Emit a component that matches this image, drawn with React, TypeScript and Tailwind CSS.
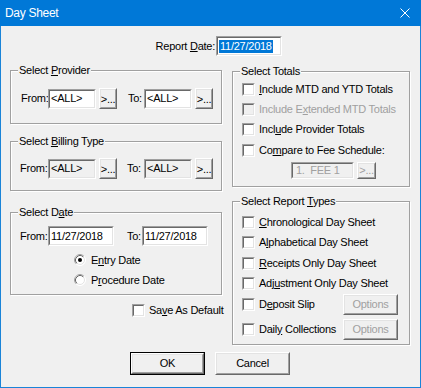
import React from 'react';

type Kids = { className?: string; children?: React.ReactNode };

const U = ({ children }: { children: React.ReactNode }) => <span className="underline underline-offset-[1px]">{children}</span>;

// classic 3D sunken edit box
const Sunken: React.FC<Kids & { inner?: string }> = ({ className = '', inner = 'bg-white', children }) => (
  <div className={`border border-t-[#a0a0a0] border-l-[#a0a0a0] border-b-white border-r-white ${className}`}>
    <div className={`flex h-full w-full items-center overflow-hidden whitespace-nowrap border border-t-[#696969] border-l-[#696969] border-b-[#e3e3e3] border-r-[#e3e3e3] px-[1px] ${inner}`}>
      {children}
    </div>
  </div>
);

// classic 3D raised button
const Raised: React.FC<Kids & { disabled?: boolean }> = ({ className = '', disabled, children }) => (
  <div className={`border border-t-white border-l-white border-b-[#696969] border-r-[#696969] bg-[#f0f0f0] ${className}`}>
    <div className={`flex h-full w-full items-center justify-center whitespace-nowrap border border-t-[#e3e3e3] border-l-[#e3e3e3] border-b-[#a0a0a0] border-r-[#a0a0a0] ${disabled ? 'text-[#a0a0a0]' : ''}`}>
      {children}
    </div>
  </div>
);

const Box = ({ disabled }: { disabled?: boolean }) => (
  <span className="block h-[13px] w-[13px] shrink-0 border border-t-[#a0a0a0] border-l-[#a0a0a0] border-b-white border-r-white">
    <span className={`block h-full w-full border border-t-[#696969] border-l-[#696969] border-b-[#e3e3e3] border-r-[#e3e3e3] ${disabled ? 'bg-[#f0f0f0]' : 'bg-white'}`} />
  </span>
);

const Check: React.FC<Kids & { disabled?: boolean }> = ({ className = '', disabled, children }) => (
  <div className={`flex items-center pl-[9px] ${className}`}>
    <Box disabled={disabled} />
    <span className={`ml-[4px] whitespace-nowrap ${disabled ? 'text-[#a0a0a0]' : ''}`}>{children}</span>
  </div>
);

const Radio = ({ checked, children }: { checked?: boolean; children: React.ReactNode }) => (
  <div className="flex h-[20px] items-center pl-[63px]">
    <svg width="12" height="12" viewBox="0 0 12 12" className="shrink-0">
      <circle cx="6" cy="6" r="5.5" fill="#fff" stroke="#fff" />
      <circle cx="6" cy="6" r="4.5" fill="#fff" stroke="#e3e3e3" />
      <path d="M2.11 9.89 A5.5 5.5 0 0 1 9.89 2.11" fill="none" stroke="#a0a0a0" />
      <path d="M2.82 9.18 A4.5 4.5 0 0 1 9.18 2.82" fill="none" stroke="#696969" />
      {checked && <circle cx="6" cy="6" r="2" fill="#000" />}
    </svg>
    <span className="ml-[5px] whitespace-nowrap">{children}</span>
  </div>
);

const Group: React.FC<Kids & { title: React.ReactNode }> = ({ title, className = '', children }) => (
  <fieldset className={`m-0 min-w-0 border border-[#a0a0a0] p-0 shadow-[inset_1px_1px_0_#fff,1px_1px_0_#fff] ${className}`}>
    <legend className="ml-[7px] whitespace-nowrap bg-[#f0f0f0] px-[1px] leading-[13px]">{title}</legend>
    {children}
  </fieldset>
);

const Dots = ({ disabled }: { disabled?: boolean }) => (
  <Raised disabled={disabled} className="ml-[3px] h-[21px] w-[18px]">
    <span className="pt-[2px]">&gt;...</span>
  </Raised>
);

export default function App() {
  return (
    <div className="flex h-[388px] w-[421px] flex-col bg-[#f0f0f0] font-['Liberation_Sans',Arial,sans-serif] text-[11px] leading-[13px] tracking-[-0.25px] text-black">
      {/* title bar */}
      <div className="flex h-[26px] shrink-0 items-center justify-between bg-[#0078d7] pl-[5px] pr-[11px] text-white">
        <span className="text-[12px] tracking-[-0.3px]">Day Sheet</span>
        <svg width="10" height="10" viewBox="0 0 10 10">
          <path d="M0.5 0.5 L9.5 9.5 M9.5 0.5 L0.5 9.5" stroke="#fff" strokeWidth="1" />
        </svg>
      </div>

      <div className="flex-1 border-x border-b border-[#1a84d8]">
        {/* report date */}
        <div className="mt-[10px] flex h-[20px] items-center pl-[151px]">
          <span className="w-[63px] whitespace-nowrap text-right">Report <U>D</U>ate:</span>
          <Sunken className="ml-[1px] h-[20px] w-[66px]">
            <span className="bg-[#0078d7] px-[1px] text-white">11/27/2018</span>
          </Sunken>
        </div>

        <div className="mt-[8px] flex pl-[9px]">
          {/* left column */}
          <div className="flex w-[212px] flex-col">
            <Group title={<>Select <U>P</U>rovider</>} className="h-[60px]">
              <div className="mt-[11px] flex h-[21px] items-center pl-[10px]">
                <span className="w-[27px]">From:</span>
                <Sunken className="h-[20px] w-[48px]">&lt;ALL&gt;</Sunken>
                <Dots />
                <span className="ml-[11px] w-[16px]">To:</span>
                <Sunken className="h-[20px] w-[48px]">&lt;ALL&gt;</Sunken>
                <Dots />
              </div>
            </Group>

            <Group title={<>Select <U>B</U>illing Type</>} className="mt-[11px] h-[56px]">
              <div className="mt-[10px] flex h-[21px] items-center pl-[9px]">
                <span className="w-[28px]">From:</span>
                <Sunken className="h-[20px] w-[48px]" inner="bg-[#f0f0f0]">&lt;ALL&gt;</Sunken>
                <Dots />
                <span className="ml-[10px] w-[17px]">To:</span>
                <Sunken className="h-[20px] w-[48px]" inner="bg-[#f0f0f0]">&lt;ALL&gt;</Sunken>
                <Dots />
              </div>
            </Group>

            <Group title={<>Select D<U>a</U>te</>} className="mt-[15px] h-[89px]">
              <div className="mt-[7px] flex h-[20px] items-center pl-[9px]">
                <span className="w-[28px]">From:</span>
                <Sunken className="h-[20px] w-[66px]">11/27/2018</Sunken>
                <span className="ml-[13px] w-[15px]">To:</span>
                <Sunken className="h-[20px] w-[66px]">11/27/2018</Sunken>
              </div>
              <div className="mt-[4px]">
                <Radio checked>E<U>n</U>try Date</Radio>
                <Radio>P<U>r</U>ocedure Date</Radio>
              </div>
            </Group>

            <div className="mt-[9px] flex h-[13px] items-center pl-[122px]">
              <Box />
              <span className="ml-[4px] whitespace-nowrap">Sa<U>v</U>e As Default</span>
            </div>
          </div>

          {/* right column */}
          <div className="ml-[10px] mt-[1px] flex w-[178px] flex-col">
            <Group title="Select Totals" className="h-[122px]">
              <div className="mt-[1px]">
                <Check className="h-[20px]"><U>I</U>nclude MTD and YTD Totals</Check>
                <Check className="h-[20px]" disabled>Include E<U>x</U>tended MTD Totals</Check>
                <Check className="h-[21px]">Incl<U>u</U>de Provider Totals</Check>
                <Check className="h-[20px]">Co<U>m</U>pare to Fee Schedule:</Check>
              </div>
              <div className="mt-[2px] flex h-[17px] items-center pl-[58px]">
                <Sunken className="h-[17px] w-[63px] text-[#a0a0a0]" inner="bg-[#f0f0f0]">
                  <span className="pl-[2px]">1.&nbsp; FEE 1</span>
                </Sunken>
                <Raised disabled className="ml-[3px] h-[17px] w-[19px]">&gt;...</Raised>
              </div>
            </Group>

            <Group title={<>Select Report <U>T</U>ypes</>} className="mt-[8px] h-[150px]">
              <div className="mt-[4px]">
                <Check className="h-[20px]"><U>C</U>hronological Day Sheet</Check>
                <Check className="h-[21px]">A<U>l</U>phabetical Day Sheet</Check>
                <Check className="h-[20px]"><U>R</U>eceipts Only Day Sheet</Check>
                <Check className="h-[20px]">Adj<U>u</U>stment Only Day Sheet</Check>
              </div>
              <div className="mt-[1px] flex h-[21px] items-center justify-between pr-[11px]">
                <Check>D<U>e</U>posit Slip</Check>
                <Raised disabled className="h-[21px] w-[55px]">Options</Raised>
              </div>
              <div className="mt-[4px] flex h-[21px] items-center justify-between pr-[11px]">
                <Check>Dail<U>y</U> Collections</Check>
                <Raised disabled className="h-[21px] w-[55px]">Options</Raised>
              </div>
            </Group>
          </div>
        </div>

        {/* dialog buttons */}
        <div className="mt-[7px] flex pl-[129px]">
          <div className="h-[23px] w-[75px] border border-black">
            <Raised className="h-full w-full">OK</Raised>
          </div>
          <Raised className="ml-[10px] h-[23px] w-[75px]">Cancel</Raised>
        </div>
      </div>
    </div>
  );
}
